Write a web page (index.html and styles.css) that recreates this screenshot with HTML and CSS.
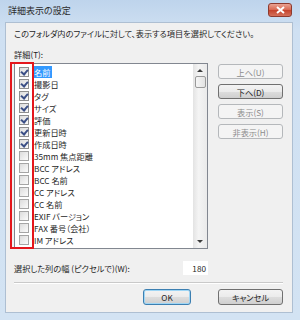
FILE: index.html
```html
<!DOCTYPE html>
<html lang="ja">
<head>
  <meta charset="UTF-8">
  <title>詳細表示の設定</title>
  <link rel="stylesheet" href="styles.css">
</head>
<body>
  <div class="window">
    <div class="titlebar">
      <span class="title">詳細表示の設定</span>
      <span class="close">
        <svg width="9" height="8" viewBox="0 0 9 8"><path d="M1 1 L8 7 M8 1 L1 7" stroke="#fff" stroke-width="2"/></svg>
      </span>
    </div>

    <div class="client">
      <p class="intro">このフォルダ内のファイルに対して、表示する項目を選択してください。</p>
      <div class="label">詳細(T):</div>

      <div class="main">
        <div class="listbox">
          <ul class="items">
            <li><span class="check on"></span><span class="name selected">名前</span></li>
            <li><span class="check on"></span><span class="name">撮影日</span></li>
            <li><span class="check on"></span><span class="name">タグ</span></li>
            <li><span class="check on"></span><span class="name">サイズ</span></li>
            <li><span class="check on"></span><span class="name">評価</span></li>
            <li><span class="check on"></span><span class="name">更新日時</span></li>
            <li><span class="check on"></span><span class="name">作成日時</span></li>
            <li><span class="check"></span><span class="name">35mm 焦点距離</span></li>
            <li><span class="check"></span><span class="name">BCC アドレス</span></li>
            <li><span class="check"></span><span class="name">BCC 名前</span></li>
            <li><span class="check"></span><span class="name">CC アドレス</span></li>
            <li><span class="check"></span><span class="name">CC 名前</span></li>
            <li><span class="check"></span><span class="name">EXIF バージョン</span></li>
            <li><span class="check"></span><span class="name">FAX 番号（会社）</span></li>
            <li><span class="check"></span><span class="name">IM アドレス</span></li>
          </ul>
          <div class="scrollbar">
            <span class="arrow up"></span>
            <span class="thumb"></span>
            <span class="arrow down"></span>
          </div>
          <div class="mark"></div>
        </div>

        <div class="side">
          <button disabled>上へ(U)</button>
          <button>下へ(D)</button>
          <button disabled>表示(S)</button>
          <button disabled>非表示(H)</button>
        </div>
      </div>

      <div class="width-row">
        <span>選択した列の幅 (ピクセルで)(W):</span>
        <span class="field">180</span>
      </div>

      <div class="sep"></div>

      <div class="footer">
        <button class="default">OK</button>
        <button class="cancel">キャンセル</button>
      </div>
    </div>
  </div>
</body>
</html>
```

FILE: styles.css
```css
body {
  margin: 0;
  font-family: "Noto Sans CJK JP", "Noto Sans", sans-serif;
  font-feature-settings: "palt";
  font-size: 8.2px;
  color: #1e1e1e;
  background: #c9dcf0;
}
.window {
  width: 300px;
  height: 320px;
  display: flex;
  flex-direction: column;
  background: linear-gradient(#bed4ec, #cfe0f2 30px, #d3e3f3);
}
.titlebar {
  height: 22px;
  display: flex;
  align-items: center;
  justify-content: space-between;
  padding: 0 8px 0 8px;
}
.title {
  color: #2b2b2b;
  font-size: 9px;
  margin-top: -1px;
}
.close {
  width: 22px;
  height: 12px;
  margin-top: -2px;
  border: 1px solid #8d3a2e;
  border-radius: 3px;
  background: linear-gradient(#e9a393, #d8664f 50%, #c4412b 51%, #d4705a);
  display: flex;
  align-items: center;
  justify-content: center;
}
.client {
  margin: 0 7px 7px 5px;
  height: 291px;
  box-sizing: border-box;
  background: #f0f0f0;
  border: 1px solid #aebfd2;
  padding: 4px 9px 0 8px;
}
.intro {
  margin: 0;
  line-height: 12px;
}
.label {
  margin-top: 9px;
  line-height: 12px;
}

.main {
  display: flex;
  margin-top: 3px;
}
.listbox {
  position: relative;
  width: 194px;
  height: 186px;
  box-sizing: border-box;
  border: 1px solid #828790;
  background: #fff;
  display: flex;
}
.items {
  list-style: none;
  margin: 0;
  padding: 2px 0 0 0;
  flex: 1;
}
.items li {
  height: 12px;
  display: flex;
  align-items: center;
}
.check {
  width: 8px;
  height: 8px;
  margin-left: 4px;
  margin-right: 4px;
  border: 1px solid #a5a5a5;
  background: linear-gradient(135deg, #dcdcdc, #fbfbfb);
  position: relative;
}
.check.on {
  border-color: #8f8f8f;
}
.check.on::after {
  content: "";
  position: absolute;
  left: 2px;
  top: 0;
  width: 3px;
  height: 5px;
  border: solid #3b4f86;
  border-width: 0 2px 2px 0;
  transform: rotate(40deg);
}
.name {
  line-height: 12px;
  padding: 0 2px 0 1px;
}
.name.selected {
  background: #3399ff;
  color: #fff;
}
.scrollbar {
  width: 14px;
  background: linear-gradient(90deg, #e3e3e3, #f4f4f4 40%, #eaeaea);
  display: flex;
  flex-direction: column;
  align-items: center;
  position: relative;
}
.arrow {
  width: 0;
  height: 0;
  border-left: 3px solid transparent;
  border-right: 3px solid transparent;
}
.arrow.up {
  margin-top: 5px;
  border-bottom: 3px solid #3c3c3c;
}
.arrow.down {
  margin-top: auto;
  margin-bottom: 5px;
  border-top: 3px solid #3c3c3c;
}
.thumb {
  margin-top: 4px;
  width: 11px;
  height: 12px;
  box-sizing: border-box;
  border: 1px solid #9a9a9a;
  border-radius: 2px;
  background: linear-gradient(90deg, #f6f6f6, #e2e2e2);
}
.mark {
  position: absolute;
  left: -5px;
  top: -2px;
  width: 20px;
  height: 183px;
  border: 2px solid #e4161c;
}

.side {
  margin-left: 10px;
  display: flex;
  flex-direction: column;
  gap: 5px;
  padding-top: 1px;
}
button {
  font: inherit;
  font-feature-settings: "palt";
  height: 15px;
  width: 65px;
  padding: 0;
  line-height: 12px;
  color: #1e1e1e;
  border: 1px solid #707070;
  border-radius: 3px;
  background: linear-gradient(#f3f3f3, #ebebeb 50%, #dddddd 51%, #cfcfcf);
}
button:disabled {
  color: #8c8c8c;
  border-color: #b5b8bb;
  background: #f4f4f4;
}

.width-row {
  width: 194px;
  margin-top: 12px;
  display: flex;
  justify-content: space-between;
  align-items: center;
  height: 14px;
}
.field {
  width: 25px;
  height: 14px;
  line-height: 14px;
  background: #fff;
  text-align: right;
  padding-right: 2px;
  box-sizing: border-box;
}
.sep {
  width: 269px;
  margin-top: 7px;
  border-top: 1px solid #c9c9c9;
  border-bottom: 1px solid #fff;
}
.footer {
  width: 269px;
  margin-top: 5px;
  display: flex;
  justify-content: flex-end;
  gap: 27px;
}
.footer button {
  height: 16px;
}
.footer .default {
  width: 48px;
  border-color: #3c7fb1;
  box-shadow: inset 0 0 0 1px #9fd6f5;
}
```
